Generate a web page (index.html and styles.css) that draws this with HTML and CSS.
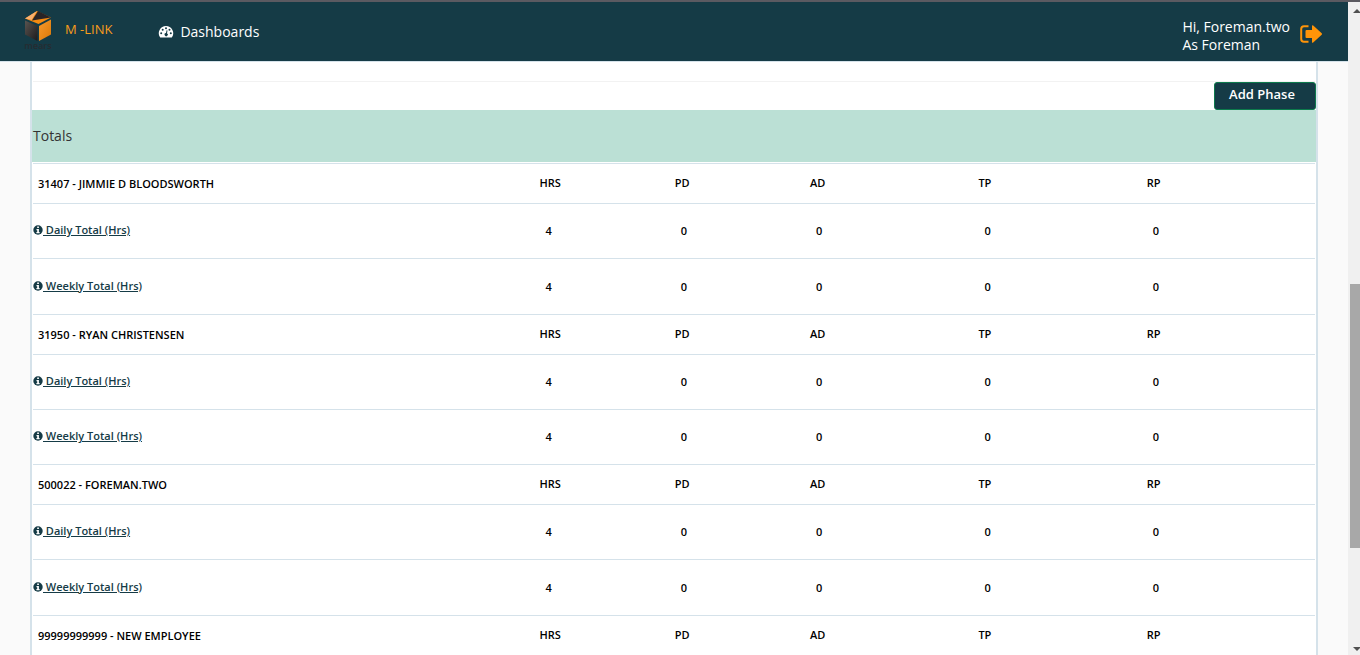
FILE: index.html
```html
<!DOCTYPE html>
<html lang="en">
<head>
<meta charset="utf-8">
<title>M-Link</title>
<link rel="stylesheet" href="styles.css">
</head>
<body>
<div class="window">
  <div class="app">
    <header class="topbar">
      <a class="brand" href="#">
        <svg class="logo" viewBox="0 0 28 44" role="img" aria-label="mears">
          <defs>
            <linearGradient id="dark" x1="0" y1="0" x2="1" y2="1"><stop offset="0" stop-color="#5a5450"/><stop offset="1" stop-color="#1c1a1c"/></linearGradient>
            <linearGradient id="gold" x1="0" y1="0" x2="1" y2="1"><stop offset="0" stop-color="#f79a2c"/><stop offset="1" stop-color="#d97808"/></linearGradient>
          </defs>
          <path d="M13 1 27 7.500 14.500 14 1 8.500Z" fill="#f58a10"/>
          <path d="M13 1 7.500 10 1 8.500Z" fill="#f8b070"/>
          <path d="M14 1 27 7.500 8 10.500Z" fill="#292426"/>
          <path d="M1 10.500 13.500 16V31L1 24.500Z" fill="url(#dark)"/>
          <path d="M15 16 27 9.500V24.500L15 31Z" fill="url(#gold)"/>
          <text x="14" y="39" text-anchor="middle" class="logo-text">mears</text>
        </svg>
        <span class="brand-name">M -LINK</span>
      </a>
      <nav class="nav">
        <a class="nav-link" href="#">
          <svg class="gauge" viewBox="0 0 16 13" aria-hidden="true">
            <path fill="#fff" d="M8 1a7.200 7.200 0 0 0-6.100 11q.3.500.8.500h10.600q.5 0 .8-.5A7.200 7.200 0 0 0 8 1Z"/>
            <g fill="#153b46"><circle cx="3.200" cy="8.200" r="1"/><circle cx="4.700" cy="4.700" r="1"/><circle cx="8" cy="3.200" r="1"/><circle cx="11.500" cy="4.700" r="1"/><circle cx="12.800" cy="8.200" r="1"/><path d="M8.600 5.200 9.500 5.400 9 8.300a1.600 1.600 0 1 1-1-.2Z"/></g>
          </svg>
          Dashboards
        </a>
      </nav>
      <div class="user">
        <div>Hi, Foreman.two<br>As Foreman</div>
        <button class="logout" type="button" aria-label="Log out">
          <svg viewBox="0 0 24 20" aria-hidden="true">
            <path d="M9.500 2.200H5Q2.200 2.200 2.200 5v10q0 2.800 2.800 2.800h4.500" fill="none" stroke="#ff9408" stroke-width="2"/>
            <path d="M6.500 7q0-1 1-1h5.500V2q0-1.400 1.200-.5l8.500 7.700q.8.800 0 1.600l-8.500 7.700q-1.200.9-1.200-.5V14H7.500q-1 0-1-1Z" fill="#ff9408"/>
          </svg>
        </button>
      </div>
    </header>
    <main class="page">
      <section class="panel">
        <div class="spacer"></div>
        <div class="actions"><button class="add" type="button">Add Phase</button></div>
        <h2 class="totals">Totals</h2>
        <table class="grid">
          <colgroup><col><col class="narrow"><col class="narrow"><col class="wide"><col class="wide"><col class="wide"></colgroup>
          <tbody>
            <tr class="head"><th>31407 - JIMMIE D BLOODSWORTH</th><th>HRS</th><th>PD</th><th>AD</th><th>TP</th><th>RP</th></tr>
            <tr class="daily"><td><a href="#"><svg class="info" viewBox="0 0 10 10" aria-hidden="true"><use href="#info"/></svg> Daily Total (Hrs)</a></td><td>4</td><td>0</td><td>0</td><td>0</td><td>0</td></tr>
            <tr class="weekly"><td><a href="#"><svg class="info" viewBox="0 0 10 10" aria-hidden="true"><use href="#info"/></svg> Weekly Total (Hrs)</a></td><td>4</td><td>0</td><td>0</td><td>0</td><td>0</td></tr>
          </tbody>
          <tbody>
            <tr class="head"><th>31950 - RYAN CHRISTENSEN</th><th>HRS</th><th>PD</th><th>AD</th><th>TP</th><th>RP</th></tr>
            <tr class="daily"><td><a href="#"><svg class="info" viewBox="0 0 10 10" aria-hidden="true"><use href="#info"/></svg> Daily Total (Hrs)</a></td><td>4</td><td>0</td><td>0</td><td>0</td><td>0</td></tr>
            <tr class="weekly"><td><a href="#"><svg class="info" viewBox="0 0 10 10" aria-hidden="true"><use href="#info"/></svg> Weekly Total (Hrs)</a></td><td>4</td><td>0</td><td>0</td><td>0</td><td>0</td></tr>
          </tbody>
          <tbody>
            <tr class="head"><th>500022 - FOREMAN.TWO</th><th>HRS</th><th>PD</th><th>AD</th><th>TP</th><th>RP</th></tr>
            <tr class="daily"><td><a href="#"><svg class="info" viewBox="0 0 10 10" aria-hidden="true"><use href="#info"/></svg> Daily Total (Hrs)</a></td><td>4</td><td>0</td><td>0</td><td>0</td><td>0</td></tr>
            <tr class="weekly"><td><a href="#"><svg class="info" viewBox="0 0 10 10" aria-hidden="true"><use href="#info"/></svg> Weekly Total (Hrs)</a></td><td>4</td><td>0</td><td>0</td><td>0</td><td>0</td></tr>
          </tbody>
          <tbody>
            <tr class="head"><th>99999999999 - NEW EMPLOYEE</th><th>HRS</th><th>PD</th><th>AD</th><th>TP</th><th>RP</th></tr>
          </tbody>
        </table>
      </section>
    </main>
  </div>
  <div class="scrollbar" aria-hidden="true">
    <svg class="arrow" viewBox="0 0 8 4"><path d="M0 4 4 0 8 4Z" fill="#505050"/></svg>
    <div class="track"><div class="thumb"></div></div>
    <svg class="arrow" viewBox="0 0 8 4"><path d="M0 0 4 4 8 0Z" fill="#505050"/></svg>
  </div>
</div>
<svg class="symbols" aria-hidden="true">
  <symbol id="info" viewBox="0 0 10 10">
    <circle cx="5" cy="5" r="4.700" fill="#153b46"/>
    <path d="M4.200 1.600h1.700v1.500H4.200ZM3.500 4.100h2.400v3h.7v1.100H3.400V7.100h.8V5.200h-.7Z" fill="#fff"/>
  </symbol>
</svg>
</body>
</html>
```
FILE: styles.css
```css
* { box-sizing: border-box; }
body {
  margin: 0;
  font-family: "Open Sans", "Noto Sans", sans-serif;
  color: #000;
  background: #fafafa;
}
button { font: inherit; cursor: pointer; }
a { color: inherit; text-decoration: none; }
.symbols { display: none; }

.window {
  display: flex;
  height: 100vh;
  overflow: hidden;
  border-top: 2px solid #5b5a61;
}
.app { flex: 1; min-width: 0; display: flex; flex-direction: column; }

.topbar {
  flex: none;
  display: flex;
  align-items: center;
  height: 60px;
  padding: 0 25px 0 24px;
  background: #153b46;
  border-bottom: 1px solid #d5e2ea;
  color: #fff;
  font-size: 14px;
  line-height: 18px;
}
.brand { display: flex; align-items: center; gap: 13px; }
.logo { width: 28px; height: 44px; overflow: visible; }
.logo-text { font: 600 9px "Open Sans", sans-serif; fill: #262c31; }
.brand-name { color: #f99d1c; font-size: 13px; padding-bottom: 5px; }
.nav { flex: 1; padding: 2px 0 0 46px; }
.nav-link { display: inline-flex; align-items: center; gap: 6px; }
.gauge { width: 16px; height: 13px; }
.user { display: flex; align-items: center; gap: 9px; padding-top: 8px; }
.logout { width: 24px; height: 24px; padding: 0 0 4px; border: 0; background: none; }
.logout svg { display: block; width: 24px; height: 20px; }

.page { flex: 1; min-height: 0; overflow: hidden; padding: 0 30px; }
.panel {
  background: #fff;
  border: 2px solid #d5e2ea;
  border-width: 0 2px;
  min-height: 100%;
}
.spacer { height: 20px; margin: 0 1px; border-bottom: 1px solid #f2f2f2; }
.actions { display: flex; justify-content: flex-end; }
.add {
  width: 102px;
  height: 28px;
  padding: 0 6px 4px 0;
  border: 1px solid #0c7a4c;
  border-radius: 3px;
  background: #153b46;
  color: #fff;
  font-size: 13px;
  font-weight: 600;
}
.totals {
  margin: 0;
  padding: 0 1px;
  background: #bbe0d5;
  color: #333;
  font-size: 14px;
  font-weight: 400;
  line-height: 52px;
}

.grid {
  width: calc(100% - 2px);
  margin: 1px 1px 0;
  table-layout: fixed;
  border-collapse: separate;
  border-spacing: 0;
  font-size: 11px;
  font-weight: 600;
  line-height: 16px;
}
.narrow { width: 10.55%; }
.wide { width: 13.13%; }
.grid th, .grid td {
  padding: 0;
  border-top: 1px solid #d5e2ea;
  text-align: left;
  font-weight: 600;
}
.head { height: 40px; }
.daily { height: 55px; }
.weekly { height: 56px; }
.grid tbody:nth-of-type(even) .weekly { height: 55px; }
.head th:first-child { padding-left: 5px; }
.grid .head th + th { padding-bottom: 2px; }
.grid td:first-child { padding-bottom: 2px; }
.grid td + td { padding-left: 6px; }
.grid a { color: #153b46; text-decoration: underline; }
.info { width: 10px; height: 10px; vertical-align: -1px; }

.scrollbar {
  flex: none;
  display: flex;
  flex-direction: column;
  width: 12px;
  padding: 7px 0 4px 2px;
  background: #f0f0f0;
}
.arrow { width: 8px; height: 4px; margin-left: 3px; }
.track { flex: 1; padding-top: 43vh; margin-top: -11px; }
.thumb { height: 264px; background: #a8a8a8; }
```
